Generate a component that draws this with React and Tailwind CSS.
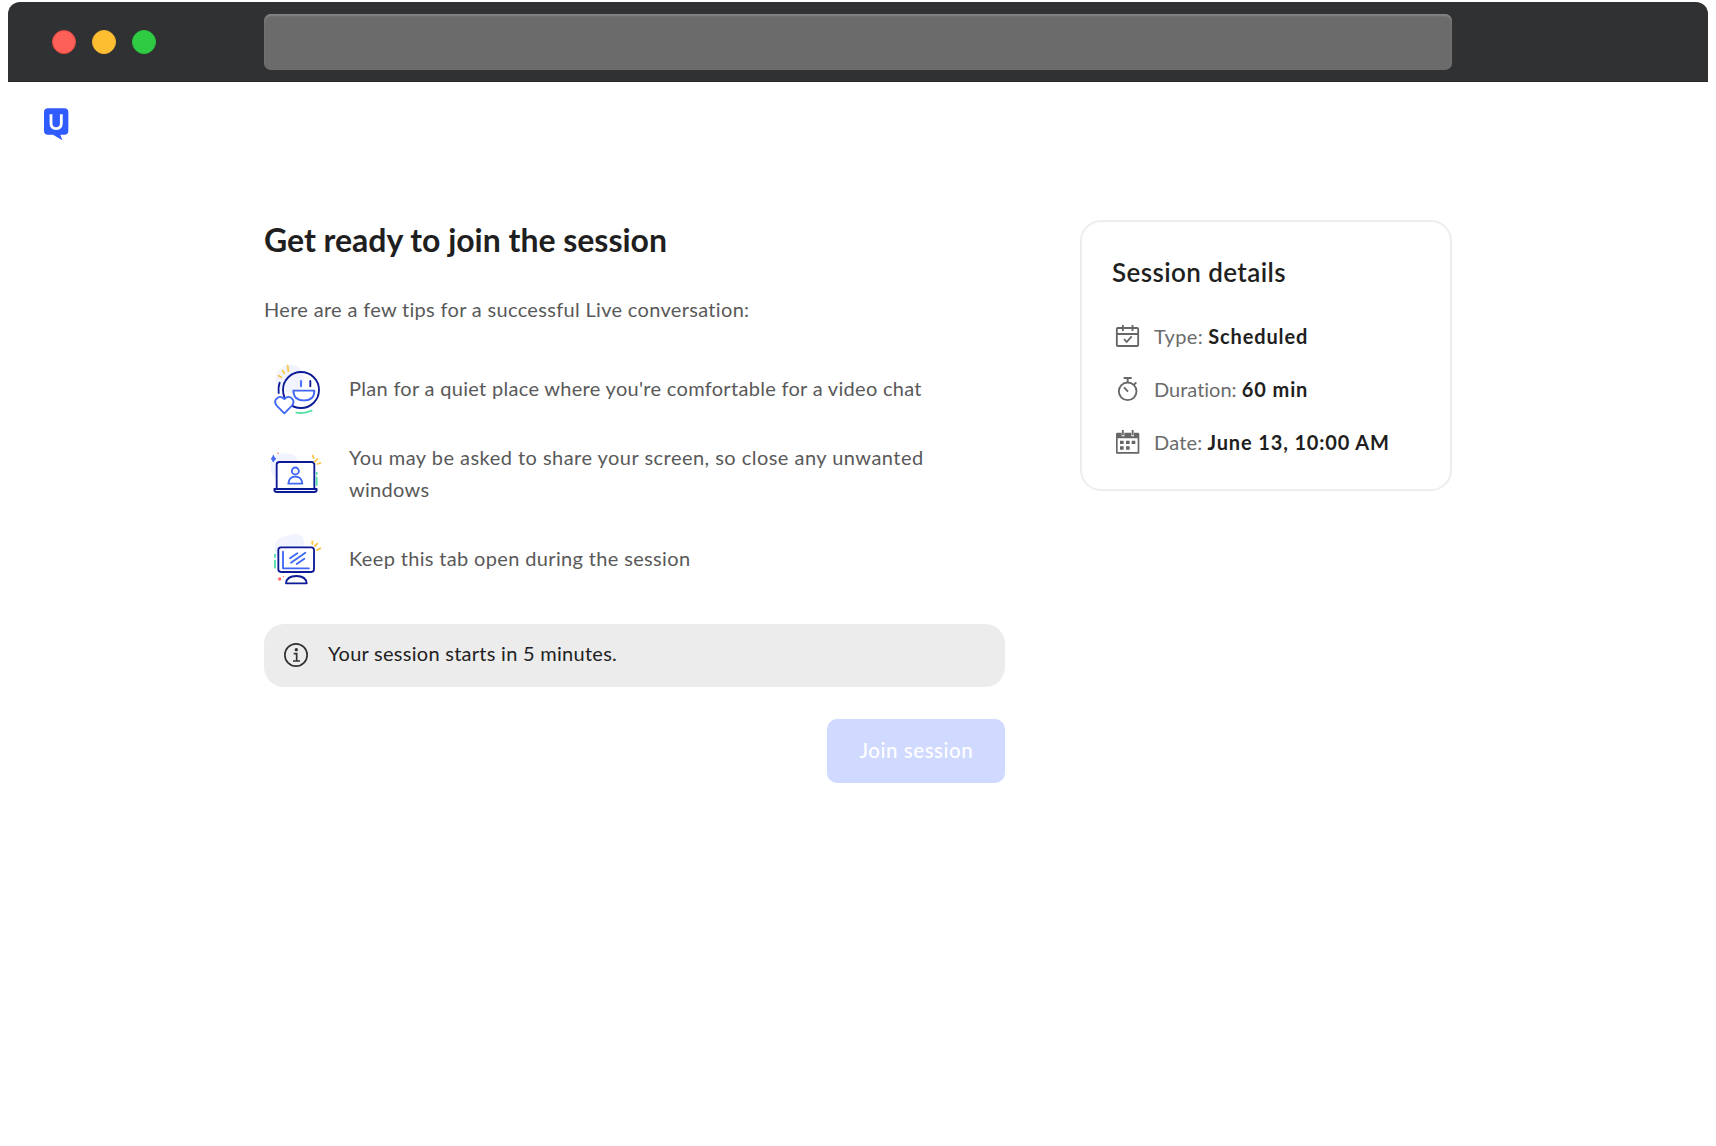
const Logo = () => (
  <svg className="h-9 w-8" viewBox="120 315 96 108" fill="none">
    <path d="M144 325h49q12 0 12 12v55q0 12-12 12h-12l6 17-28-17h-15q-12 0-12-12v-55q0-12 12-12z" fill="#2f5bff" />
    <path d="M153 343v27q0 16 15.500 16t15.500-16v-27" stroke="#fff" strokeWidth="8.500" />
  </svg>
);

const SmileArt = () => (
  <svg className="size-16 shrink-0" viewBox="27 23 192 192" fill="none" strokeLinecap="round" strokeLinejoin="round" strokeWidth="5.500">
    <path d="M62 92c-3-30 20-48 46-48 26 0 42 22 38 50-3 20-20 34-44 34-24-2-38-14-40-36z" fill="#f1f4fe" />
    <circle cx="138" cy="119" r="54" stroke="#0c1a96" />
    <path d="M74 97q-5 14-3 31" stroke="#0c1a96" />
    <path d="M138 92v16" stroke="#3f66f5" />
    <path d="M166 92v16" stroke="#0c1a96" />
    <path d="M115 121h63q0 29-31 29t-32-29z" fill="#fff" stroke="#3f66f5" />
    <path d="M88 189L65 166q-8-10-2-19 11-14 25-1 14-13 25 1 6 9-2 19z" fill="#fff" stroke="#3f66f5" />
    <path d="M71 76l8 5M83 61l5 8M98 46l2 17" stroke="#fbc546" />
    <path d="M124 187q25 4 46-6" stroke="#52dfa8" />
  </svg>
);

const LaptopArt = () => (
  <svg className="size-16 shrink-0" viewBox="27 9 192 192" fill="none" strokeLinecap="round" strokeLinejoin="round" strokeWidth="5.500">
    <path d="M47 78c0-28 24-38 48-38 26 0 36 14 30 40-5 26-28 40-50 40-20-2-28-20-28-42z" fill="#f1f4fe" />
    <path d="M65 145V74q0-8 8-8h97q8 0 8 8v71" fill="#fff" stroke="#0c1a96" />
    <path d="M58 147h127v2q0 7-8 7H66q-8 0-8-7z" fill="#fff" stroke="#0c1a96" />
    <circle cx="121" cy="93" r="10.500" stroke="#3f66f5" />
    <path d="M100 131q2-21 21-21t21 21z" stroke="#3f66f5" />
    <path d="M55 47q2 8 8 9-6 1-8 10-2-9-7-10 5-1 7-9z" fill="#3f66f5" stroke="#3f66f5" strokeWidth="3" />
    <circle cx="69" cy="40" r="2.500" fill="#f66" />
    <path d="M173 47l3 7M187 57l-8 9M196 69l-9 3" stroke="#fbc546" />
    <path d="M185 98v4M185 112v23" stroke="#52dfa8" />
  </svg>
);

const MonitorArt = () => (
  <svg className="size-16 shrink-0" viewBox="27 25 192 192" fill="none" strokeLinecap="round" strokeLinejoin="round" strokeWidth="5.500">
    <path d="M59 90c0-26 12-38 32-40 22-10 52-12 55 10 4 30-4 60-34 64-30 2-53-10-53-34z" fill="#f1f4fe" />
    <path d="M60 105v7M60 122v22" stroke="#52dfa8" />
    <rect x="70" y="83" width="107" height="74" rx="8" fill="#fff" stroke="#0c1a96" />
    <path d="M84 96v50h78M105 116l22-15M108 129l43-30M125 133l23-16" stroke="#3f66f5" />
    <path d="M93 191q2-22 31-22t31 22z" fill="#fff" stroke="#0c1a96" />
    <circle cx="74" cy="178" r="5" fill="#ff6b6b" />
    <circle cx="85" cy="171" r="2" fill="#ff6b6b" />
    <path d="M172 65v8M187 72l-7 7M196 86l-10 5" stroke="#fbc546" />
  </svg>
);

const ScheduleIcon = () => (
  <svg className="h-8 w-8 shrink-0" viewBox="126 333 96 96" fill="none" stroke="#666" strokeWidth="5.500" strokeLinejoin="round">
    <rect x="140.500" y="357" width="64" height="54" rx="3" />
    <path d="M140 375h65M158.500 348v18M187.500 348v18" />
    <path d="M162 390l8 9 15-17" />
  </svg>
);

const TimerIcon = () => (
  <svg className="h-8 w-8 shrink-0" viewBox="126 492 96 96" fill="none" stroke="#666" strokeWidth="5.500">
    <circle cx="173" cy="547" r="26.500" />
    <path d="M161 507h24M173 506v14M191 528l8-8M162 535l12 13" />
  </svg>
);

const DateIcon = () => (
  <svg className="h-8 w-8 shrink-0" viewBox="126 652 96 96" fill="none">
    <path d="M142 672h13v11h8v-11h21v11h8v-11h12q4 0 4 4v56q0 3-3 3h-64q-3 0-3-3v-56q0-4 4-4zM143 689v41h60v-41z" fill="#666" fillRule="evenodd" />
    <path d="M158.500 664v16M188 664v16" stroke="#666" strokeWidth="5.500" />
    <path d="M150 696h11v10h-11zM168 696h11v10h-11zM185 696h11v10h-11zM150 713h11v10h-11zM168 713h11v10h-11z" fill="#666" />
  </svg>
);

const InfoIcon = () => (
  <svg className="size-8 shrink-0" viewBox="75 88 96 96" fill="none" stroke="#333" strokeWidth="5">
    <circle cx="123" cy="136" r="33.500" />
    <path d="M116 132h9v22M114 154h21" />
    <circle cx="124" cy="120" r="5" fill="#333" stroke="none" />
  </svg>
);

const Detail = ({ icon, label, value, labelTrack, track }) => (
  <div className="flex h-[53.200px] items-center gap-2.5 text-[20px] whitespace-nowrap">
    {icon}
    <p className="leading-8 text-[#6b6b6b]">
      <span className={labelTrack}>{label}</span> <span className={`font-bold text-[#1f1f21] ${track}`}>{value}</span>
    </p>
  </div>
);

export default function App() {
  return (
    <div className="h-[1146px] overflow-hidden bg-white px-2 pt-0.5 font-['Lato',sans-serif] text-[20px] text-[#595959] [font-variant-ligatures:none]">
      <header className="flex h-20 items-center rounded-t-xl border-b border-[#272829] bg-[#303133] pl-11">
        <div className="flex w-[212px] gap-4">
          <span className="size-6 rounded-full border border-[#e2483f] bg-[#fc6058]" />
          <span className="size-6 rounded-full border border-[#f5b62e] bg-[#fdbe31]" />
          <span className="size-6 rounded-full border border-[#2cc23d] bg-[#2fcb43]" />
        </div>
        <div className="h-14 w-[1188px] rounded-[7px] bg-[#6b6b6b] shadow-[inset_0_2px_2px_#858585]" />
      </header>
      <div className="flex h-[138px] px-8 pt-[23px]">
        <Logo />
      </div>
      <div className="flex items-start justify-between px-64">
        <main className="w-[741.400px]">
          <h1 className="text-[32px] leading-[40px] font-bold tracking-[-0.020px] text-[#1f1f21]">Get ready to join the session</h1>
          <p className="mt-[33px] leading-8 tracking-[0.320px]">Here are a few tips for a successful Live conversation:</p>
          <ul className="mt-[32.600px] flex flex-col gap-[21px] leading-8">
            <li className="flex items-center gap-[21px]">
              <SmileArt />
              <span className="-mt-[3px] tracking-[0.300px]">Plan for a quiet place where you're comfortable for a video chat</span>
            </li>
            <li className="flex items-center gap-[21px]">
              <LaptopArt />
              <span className="-mt-[3px] tracking-[0.470px]">
                You may be asked to share your screen, so close any unwanted
                <br />
                <span className="tracking-[0.300px]">windows</span>
              </span>
            </li>
            <li className="flex items-center gap-[21px]">
              <MonitorArt />
              <span className="-mt-[3px] tracking-[0.345px]">Keep this tab open during the session</span>
            </li>
          </ul>
          <div className="mt-8 flex h-[63.400px] items-center gap-4 rounded-[20px] bg-[#ececec] pl-4 text-[#222]">
            <InfoIcon />
            <span className="-mt-1 tracking-[0.270px]">Your session starts in 5 minutes.</span>
          </div>
          <div className="mt-[31.600px] flex justify-end">
            <button className="h-16 w-[178px] rounded-[10px] bg-[#d0d9ff] pb-px text-[20.500px] font-medium tracking-[0.550px] text-white">Join session</button>
          </div>
        </main>
        <aside className="h-[270.500px] w-[372px] rounded-[21px] border-2 border-[#ededed] pt-[31px] pl-[30px]">
          <h2 className="mb-[18px] text-[26px] leading-[38px] font-semibold tracking-[0.400px] text-[#1f1f21]">Session details</h2>
          <Detail icon={<ScheduleIcon />} label="Type:" value="Scheduled" labelTrack="tracking-[0.400px]" track="tracking-[0.850px]" />
          <Detail icon={<TimerIcon />} label="Duration:" value="60 min" labelTrack="tracking-normal" track="tracking-[0.900px]" />
          <Detail icon={<DateIcon />} label="Date:" value="June 13, 10:00 AM" labelTrack="tracking-[0.200px]" track="tracking-[0.850px]" />
        </aside>
      </div>
    </div>
  );
}
